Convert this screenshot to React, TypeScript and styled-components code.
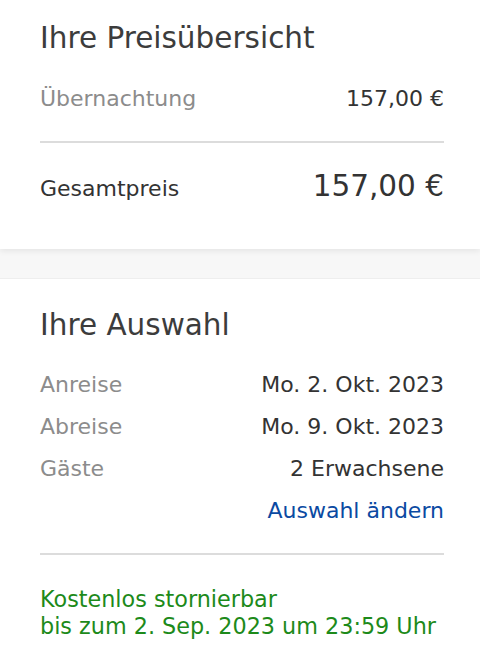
import React from "react";
import styled, { createGlobalStyle } from "styled-components";

const Global = createGlobalStyle`
  html, body { margin: 0; padding: 0; background: #ffffff; }
  body { font-family: "DejaVu Sans", Verdana, sans-serif; color: #333333; }
`;

const Page = styled.div`
  display: flex;
  flex-direction: column;
  width: 480px;
`;

const Card = styled.section<{ $top: number; $shadow?: boolean }>`
  background: #ffffff;
  padding: ${(p) => p.$top}px 36px 0 40px;
  position: relative;
  z-index: 1;
  box-shadow: ${(p) => (p.$shadow ? "0 2px 6px rgba(0,0,0,0.08)" : "none")};
`;

const Gap = styled.div`
  height: 29px;
  background: #f7f7f7;
  border-bottom: 1px solid #eeeeee;
`;

const Title = styled.h2`
  margin: 0;
  font-size: 29.5px;
  font-weight: normal;
  color: #3c3c3c;
  line-height: 36px;
  white-space: nowrap;
`;

const Rows = styled.div<{ $top: number }>`
  display: flex;
  flex-direction: column;
  gap: 10px;
  margin-top: ${(p) => p.$top}px;
`;

const Row = styled.div<{ $bottom?: number }>`
  display: flex;
  justify-content: space-between;
  align-items: baseline;
  font-size: 22px;
  line-height: 32px;
  padding-bottom: ${(p) => p.$bottom ?? 0}px;
  white-space: nowrap;
`;

const Label = styled.span<{ $dark?: boolean }>`
  color: ${(p) => (p.$dark ? "#333333" : "#8c8c8c")};
`;

const Value = styled.span<{ $big?: boolean }>`
  color: #333333;
  font-size: ${(p) => (p.$big ? "29.5px" : "22px")};
`;

const Divider = styled.hr<{ $top: number; $bottom: number }>`
  border: none;
  height: 2px;
  background: #dcdcdc;
  margin: ${(p) => p.$top}px 0 ${(p) => p.$bottom}px;
`;

const LinkRow = styled.div`
  display: flex;
  justify-content: flex-end;
  font-size: 22px;
  line-height: 32px;
`;

const Link = styled.a`
  color: #0b4aa2;
  text-decoration: none;
`;

const Note = styled.p`
  margin: 0;
  color: #1d8a1a;
  font-size: 22.3px;
  line-height: 27px;
  white-space: nowrap;
`;

export default function App() {
  return (
    <Page>
      <Global />
      <Card $top={20} $shadow>
        <Title>Ihre Preisübersicht</Title>
        <Rows $top={27}>
          <Row>
            <Label>Übernachtung</Label>
            <Value>157,00 €</Value>
          </Row>
        </Rows>
        <Divider $top={26} $bottom={27} />
        <Row $bottom={44}>
          <Label $dark>Gesamtpreis</Label>
          <Value $big>157,00 €</Value>
        </Row>
      </Card>
      <Gap />
      <Card $top={28}>
        <Title>Ihre Auswahl</Title>
        <Rows $top={26}>
          <Row>
            <Label>Anreise</Label>
            <Value>Mo. 2. Okt. 2023</Value>
          </Row>
          <Row>
            <Label>Abreise</Label>
            <Value>Mo. 9. Okt. 2023</Value>
          </Row>
          <Row>
            <Label>Gäste</Label>
            <Value>2 Erwachsene</Value>
          </Row>
          <LinkRow>
            <Link href="#">Auswahl ändern</Link>
          </LinkRow>
        </Rows>
        <Divider $top={26} $bottom={31} />
        <Note>
          Kostenlos stornierbar
          <br />
          bis zum 2. Sep. 2023 um 23:59 Uhr
        </Note>
      </Card>
    </Page>
  );
}
